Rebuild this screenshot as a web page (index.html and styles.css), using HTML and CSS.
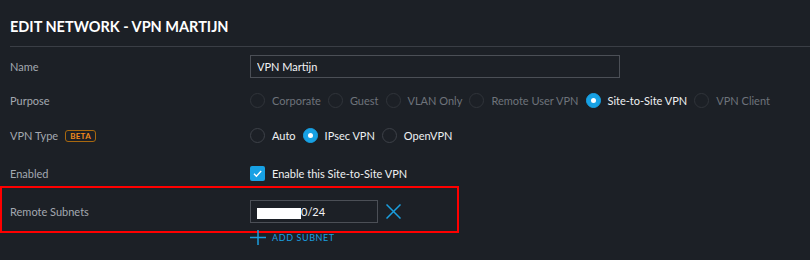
FILE: index.html
```html
<!DOCTYPE html>
<html lang="en">
<head>
    <meta charset="UTF-8">
    <title>Edit Network</title>
    <link rel="stylesheet" href="styles.css">
</head>
<body>
    <div class="page">
        <h1 class="title">Edit Network - VPN Martijn</h1>

        <div class="form">
            <div class="row">
                <div class="label">Name</div>
                <input class="text-input wide" type="text" value="VPN Martijn">
            </div>

            <div class="row row-purpose">
                <div class="label">Purpose</div>
                <div class="options">
                    <span class="radio disabled"></span><span class="opt disabled">Corporate</span>
                    <span class="radio disabled"></span><span class="opt disabled">Guest</span>
                    <span class="radio disabled"></span><span class="opt disabled">VLAN Only</span>
                    <span class="radio disabled"></span><span class="opt disabled">Remote User VPN</span>
                    <span class="radio checked"></span><span class="opt">Site-to-Site VPN</span>
                    <span class="radio disabled"></span><span class="opt disabled">VPN Client</span>
                </div>
            </div>

            <div class="row row-type">
                <div class="label">VPN Type <span class="beta">BETA</span></div>
                <div class="options">
                    <span class="radio"></span><span class="opt">Auto</span>
                    <span class="radio checked"></span><span class="opt">IPsec VPN</span>
                    <span class="radio"></span><span class="opt">OpenVPN</span>
                </div>
            </div>

            <div class="row row-enabled">
                <div class="label">Enabled</div>
                <div class="options">
                    <span class="checkbox">
                        <svg width="15" height="15" viewBox="0 0 15 15"><path d="M4 7.8 L6.4 10.2 L11.2 5" fill="none" stroke="#fff" stroke-width="1.4"/></svg>
                    </span>
                    <span class="opt">Enable this Site-to-Site VPN</span>
                </div>
            </div>

            <div class="row row-subnets">
                <div class="highlight"></div>
                <div class="label">Remote Subnets</div>
                <div class="subnet-input"><span class="redact"></span>0/24</div>
                <svg class="remove" width="15" height="15" viewBox="0 0 15 15"><path d="M0.5 0.5 L14.5 14.5 M14.5 0.5 L0.5 14.5" stroke="#1a9fe0" stroke-width="1.5"/></svg>
            </div>

            <div class="row row-add">
                <div class="label"></div>
                <svg width="16" height="15" viewBox="0 0 16 15"><path d="M8 0 V15 M0 7.5 H16" stroke="#1a9fe0" stroke-width="1.5"/></svg>
                <span class="add-link">Add Subnet</span>
            </div>
        </div>
    </div>
</body>
</html>
```

FILE: styles.css
```css
body {
    margin: 0;
    background-color: #1c2026;
    font-family: Lato, "Liberation Sans", sans-serif;
    color: #e8eaed;
    overflow: hidden;
}
.page {
    padding-left: 10px;
}
.title {
    margin: 0;
    padding: 18px 0 10px;
    font-size: 14.5px;
    line-height: 18px;
    font-weight: bold;
    text-transform: uppercase;
    color: #ffffff;
    border-bottom: 1px solid #3a3e45;
}
.form {
    padding-top: 8px;
}
.row {
    display: flex;
    align-items: center;
    height: 23px;
    position: relative;
}
.row-purpose { margin-top: 11px; }
.row-type { margin-top: 12px; }
.row-enabled { margin-top: 15px; }
.row-subnets { margin-top: 15px; }
.row-add { margin-top: 7px; height: 15px; }
.label {
    width: 240px;
    flex-shrink: 0;
    font-size: 11px;
    color: #a3a8b0;
    display: flex;
    align-items: center;
}
.text-input {
    box-sizing: border-box;
    height: 23px;
    background: transparent;
    border: 1px solid #4b4f56;
    padding: 0 6px;
    font-family: inherit;
    font-size: 11px;
    color: #f2f3f5;
    outline: none;
}
.wide {
    width: 370px;
}
.options {
    display: flex;
    align-items: center;
}
.radio {
    box-sizing: border-box;
    width: 15px;
    height: 15px;
    border-radius: 50%;
    border: 1px solid #3d4148;
    margin-right: 7px;
    position: relative;
}
.radio.disabled {
    border-color: #30343a;
}
.radio.checked {
    background-color: #17a1e4;
    border-color: #17a1e4;
}
.radio.checked::after {
    content: "";
    position: absolute;
    left: 4px;
    top: 4px;
    width: 5px;
    height: 5px;
    border-radius: 50%;
    background: #ffffff;
}
.opt {
    font-size: 11px;
    color: #eef0f2;
    margin-right: 7px;
}
.opt.disabled {
    color: #6e737b;
}
.beta {
    display: inline-block;
    margin-left: 7px;
    box-sizing: border-box;
    height: 12px;
    padding: 0 4px;
    border: 1px solid #a8680f;
    border-radius: 3px;
    font-size: 8px;
    line-height: 10px;
    font-weight: bold;
    color: #f28b1b;
    letter-spacing: 0.3px;
}
.checkbox {
    width: 15px;
    height: 15px;
    border-radius: 2px;
    background-color: #17a1e4;
    margin-right: 7px;
    display: flex;
}
.subnet-input {
    box-sizing: border-box;
    width: 128px;
    height: 23px;
    border: 1px solid #4b4f56;
    padding-left: 6px;
    display: flex;
    align-items: center;
    font-size: 11px;
    color: #f2f3f5;
}
.redact {
    width: 44px;
    height: 11px;
    background: #ffffff;
    margin-top: 3px;
}
.remove {
    margin-left: 8px;
}
.add-link {
    margin-left: 6px;
    font-size: 9px;
    letter-spacing: 0.6px;
    text-transform: uppercase;
    color: #1a9fe0;
}
.highlight {
    position: absolute;
    left: -10px;
    top: -14px;
    width: 459px;
    height: 47px;
    box-sizing: border-box;
    border: 2px solid #ff0000;
}
```
